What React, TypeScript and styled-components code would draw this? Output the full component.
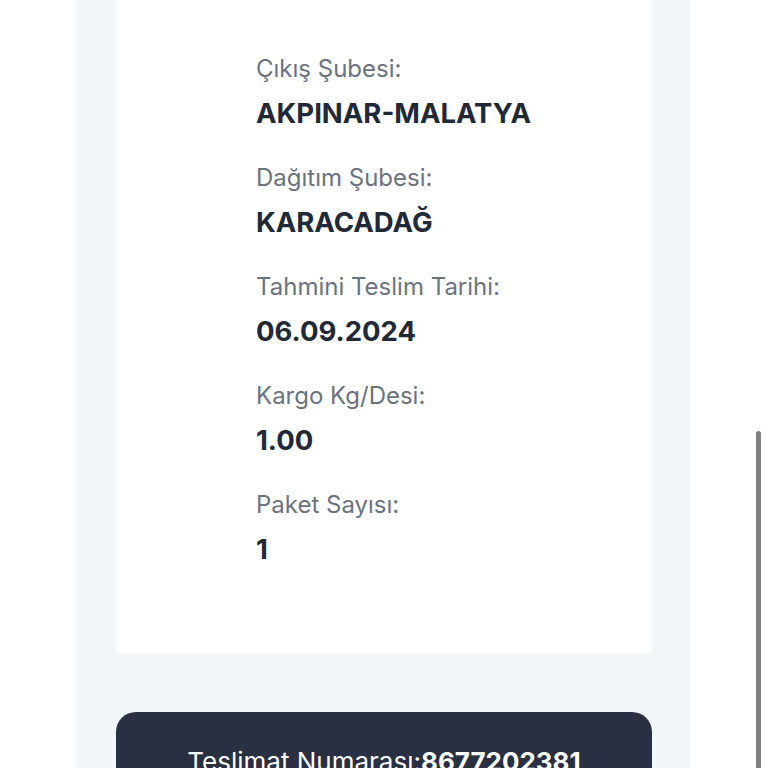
import React from 'react';
import styled, { createGlobalStyle } from 'styled-components';

const GlobalStyle = createGlobalStyle`
    html, body {
        margin: 0;
        padding: 0;
        background: #ffffff;
        height: 768px;
        overflow: hidden;
    }

    body {
        font-family: 'Inter', 'Noto Sans', sans-serif;
    }
`;

const Page = styled.main`
    position: relative;
    display: flex;
    justify-content: center;
    padding: 0 78px 0 76px;
    height: 768px;
    box-sizing: border-box;
`;

const Panel = styled.section`
    display: flex;
    flex-direction: column;
    gap: 59px;
    width: 100%;
    padding: 0 38px 0 40px;
    background: #f3f6f9;
    box-sizing: border-box;
`;

const InfoCard = styled.div`
    display: flex;
    flex-direction: column;
    gap: 33px;
    padding: 54px 40px 87px 140px;
    background: #ffffff;
`;

const Field = styled.div`
    display: flex;
    flex-direction: column;
    gap: 12px;
`;

const Label = styled.span`
    font-size: 24px;
    line-height: 30px;
    color: #6b7280;
`;

const Value = styled.span`
    font-size: 27.5px;
    line-height: 34px;
    font-weight: 700;
    color: #1f2937;
`;

const DeliveryCard = styled.div`
    display: flex;
    justify-content: center;
    padding: 35px 24px;
    border-radius: 20px 20px 0 0;
    background: #283041;
    color: #ffffff;
    font-size: 26px;
    line-height: 30px;
`;

const Number = styled.strong`
    font-weight: 700;
`;

const ScrollThumb = styled.div`
    position: absolute;
    right: 7px;
    top: 431px;
    width: 5px;
    height: 337px;
    border-radius: 3px 3px 0 0;
    background: #7f7f7f;
`;

const fields = [
    { label: 'Çıkış Şubesi:', value: 'AKPINAR-MALATYA' },
    { label: 'Dağıtım Şubesi:', value: 'KARACADAĞ' },
    { label: 'Tahmini Teslim Tarihi:', value: '06.09.2024' },
    { label: 'Kargo Kg/Desi:', value: '1.00' },
    { label: 'Paket Sayısı:', value: '1' },
];

const App = () => {
    return (
        <>
            <GlobalStyle />
            <Page>
                <Panel>
                    <InfoCard>
                        {fields.map((f) => (
                            <Field key={f.label}>
                                <Label>{f.label}</Label>
                                <Value>{f.value}</Value>
                            </Field>
                        ))}
                    </InfoCard>
                    <DeliveryCard>
                        <span>
                            Teslimat Numarası:<Number>8677202381</Number>
                        </span>
                    </DeliveryCard>
                </Panel>
                <ScrollThumb />
            </Page>
        </>
    );
};

export default App;
